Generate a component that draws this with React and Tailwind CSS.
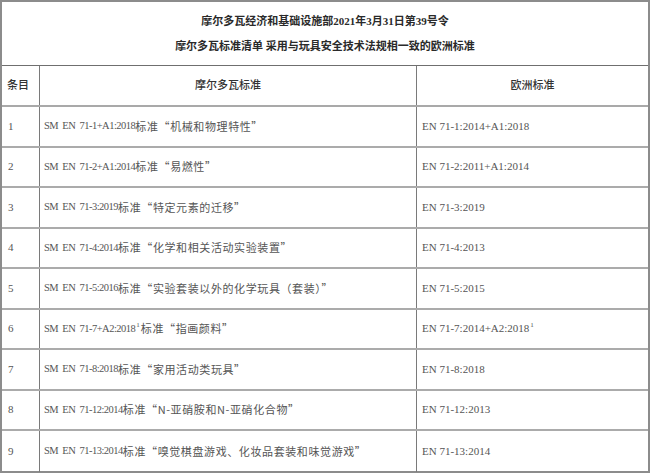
import React from "react";

const rows = [
  ["1", "SM EN 71-1+A1:2018", "标准“机械和物理特性”", "EN 71-1:2014+A1:2018", ""],
  ["2", "SM EN 71-2+A1:2014", "标准“易燃性”", "EN 71-2:2011+A1:2014", ""],
  ["3", "SM EN 71-3:2019", "标准“特定元素的迁移”", "EN 71-3:2019", ""],
  ["4", "SM EN 71-4:2014", "标准“化学和相关活动实验装置”", "EN 71-4:2013", ""],
  ["5", "SM EN 71-5:2016", "标准“实验套装以外的化学玩具（套装）”", "EN 71-5:2015", ""],
  ["6", "SM EN 71-7+A2:2018", "标准“指画颜料”", "EN 71-7:2014+A2:2018", "1", true],
  ["7", "SM EN 71-8:2018", "标准“家用活动类玩具”", "EN 71-8:2018", ""],
  ["8", "SM EN 71-12:2014", "标准“N-亚硝胺和N-亚硝化合物”", "EN 71-12:2013", ""],
  ["9", "SM EN 71-13:2014", "标准“嗅觉棋盘游戏、化妆品套装和味觉游戏”", "EN 71-13:2014", ""],
];

const font = { fontFamily: '"Liberation Serif", "Noto Sans CJK SC", serif' };
const cjk = { fontFamily: '"Noto Sans CJK SC", sans-serif' };

export default function App() {
  return (
    <div
      className="w-[652px] h-[473px] bg-white text-[#444] text-[11px] leading-none overflow-hidden"
      style={font}
    >
      <div className="w-[650px] h-[473px] border-2 border-[#8c8c8c] flex flex-col">
        <div className="h-[64px] shrink-0 border-b border-[#6f6f6f] flex flex-col items-center justify-center gap-[14px] pt-[1px] font-semibold text-[#2a2a2a]">
          <div>摩尔多瓦经济和基础设施部2021年3月31日第39号令</div>
          <div>摩尔多瓦标准清单 采用与玩具安全技术法规相一致的欧洲标准</div>
        </div>
        <div className="h-[41px] shrink-0 grid grid-cols-[38px_377px_1fr] border-b-2 border-[#a9a9a9] font-medium text-[#333]">
          <div className="flex items-center pl-[5px] border-r border-[#7a7a7a]">条目</div>
          <div className="flex items-center justify-center border-r border-[#7a7a7a]">摩尔多瓦标准</div>
          <div className="flex items-center justify-center">欧洲标准</div>
        </div>
        {rows.map((r, i) => (
          <div
            key={i}
            className={
              "h-[40.5px] shrink-0 grid grid-cols-[38px_377px_1fr] text-[#555] " +
              (i < rows.length - 1 ? "border-b-2 border-[#ababab]" : "")
            }
          >
            <div className="flex items-center pl-[6px] border-r border-[#7a7a7a]">{r[0]}</div>
            <div className="flex items-center pl-[4px] border-r border-[#7a7a7a] whitespace-nowrap">
              <span className="text-[10.5px] tracking-[-0.5px] [word-spacing:2px]">{r[1]}</span>
              {r[5] && <sup className="text-[7px] ml-[1px] mr-[1px]">1</sup>}
              <span className="tracking-[0.6px]" style={cjk}>{r[2]}</span>
            </div>
            <div className="flex items-center pl-[5px] whitespace-nowrap">
              <span>{r[3]}</span>
              {r[4] && <sup className="text-[7px] ml-[1px]">1</sup>}
            </div>
          </div>
        ))}
      </div>
    </div>
  );
}
